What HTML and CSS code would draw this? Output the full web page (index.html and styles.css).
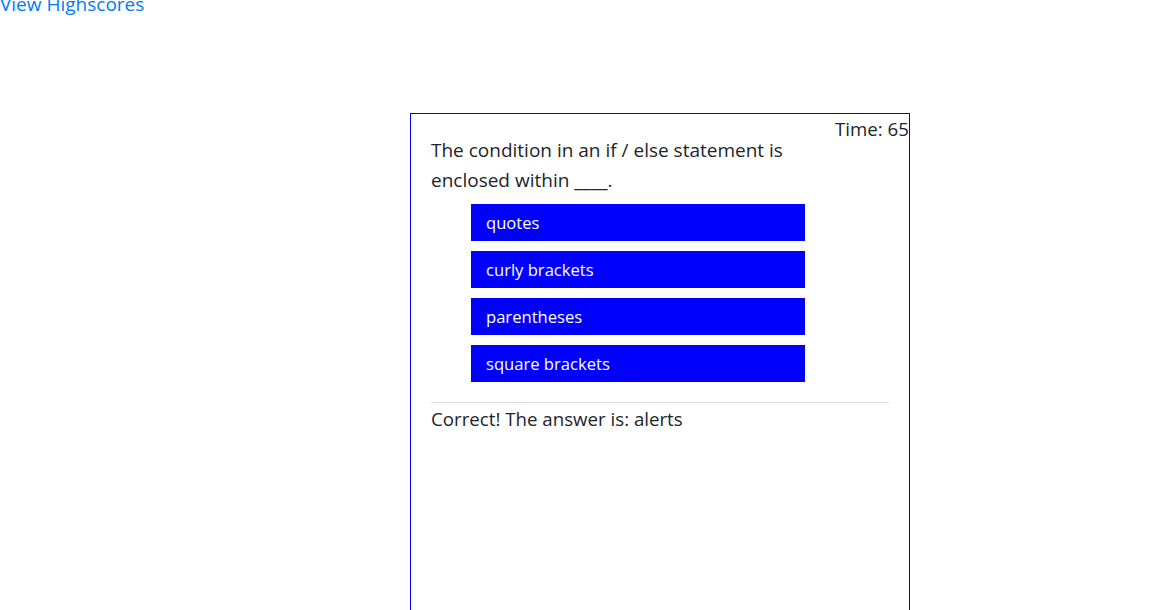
FILE: index.html
```html
<!DOCTYPE html>
<html>
<head>
<meta charset="utf-8">
<link rel="stylesheet" href="styles.css">
</head>
<body>
<header class="top">
  <a class="scores-link" href="#">View Highscores</a>
</header>
<main class="quiz">
  <div class="timer">Time: 65</div>
  <p class="question">The condition in an if / else statement is enclosed within ____.</p>
  <div class="choices">
    <button class="choice">quotes</button>
    <button class="choice">curly brackets</button>
    <button class="choice">parentheses</button>
    <button class="choice">square brackets</button>
  </div>
  <hr class="divider">
  <p class="feedback">Correct! The answer is: alerts</p>
</main>
</body>
</html>
```
FILE: styles.css
```css
html, body {
  margin: 0;
  padding: 0;
}
body {
  font-family: "Open Sans", "Noto Sans", sans-serif;
  color: #212529;
  background: #fff;
  overflow: hidden;
}
.top {
  margin-top: -8px;
  height: 121px;
}
.scores-link {
  display: inline-block;
  font-size: 19px;
  line-height: 24px;
  color: #007bff;
  text-decoration: none;
}
.quiz {
  position: relative;
  width: 458px;
  height: 520px;
  margin: 0 0 0 410px;
  padding: 21px 20px 0;
  border: 1px solid #0000ff;
}
.timer {
  position: absolute;
  top: 3px;
  right: 0;
  font-size: 18.7px;
  line-height: 24px;
}
.question {
  margin: 0 0 9px;
  width: 380px;
  font-size: 19px;
  line-height: 30px;
}
.choices {
  display: flex;
  flex-direction: column;
  gap: 10px;
  padding-left: 40px;
}
.choice {
  width: 334px;
  height: 37px;
  padding: 0 15px;
  border: 0;
  background: #0000ff;
  color: #fff;
  font-family: inherit;
  font-size: 16.6px;
  text-align: left;
}
.divider {
  margin: 20px 0 4px;
  border: 0;
  border-top: 1px solid #d9d9d9;
}
.feedback {
  margin: 0;
  font-size: 18.7px;
  line-height: 24px;
}
```
